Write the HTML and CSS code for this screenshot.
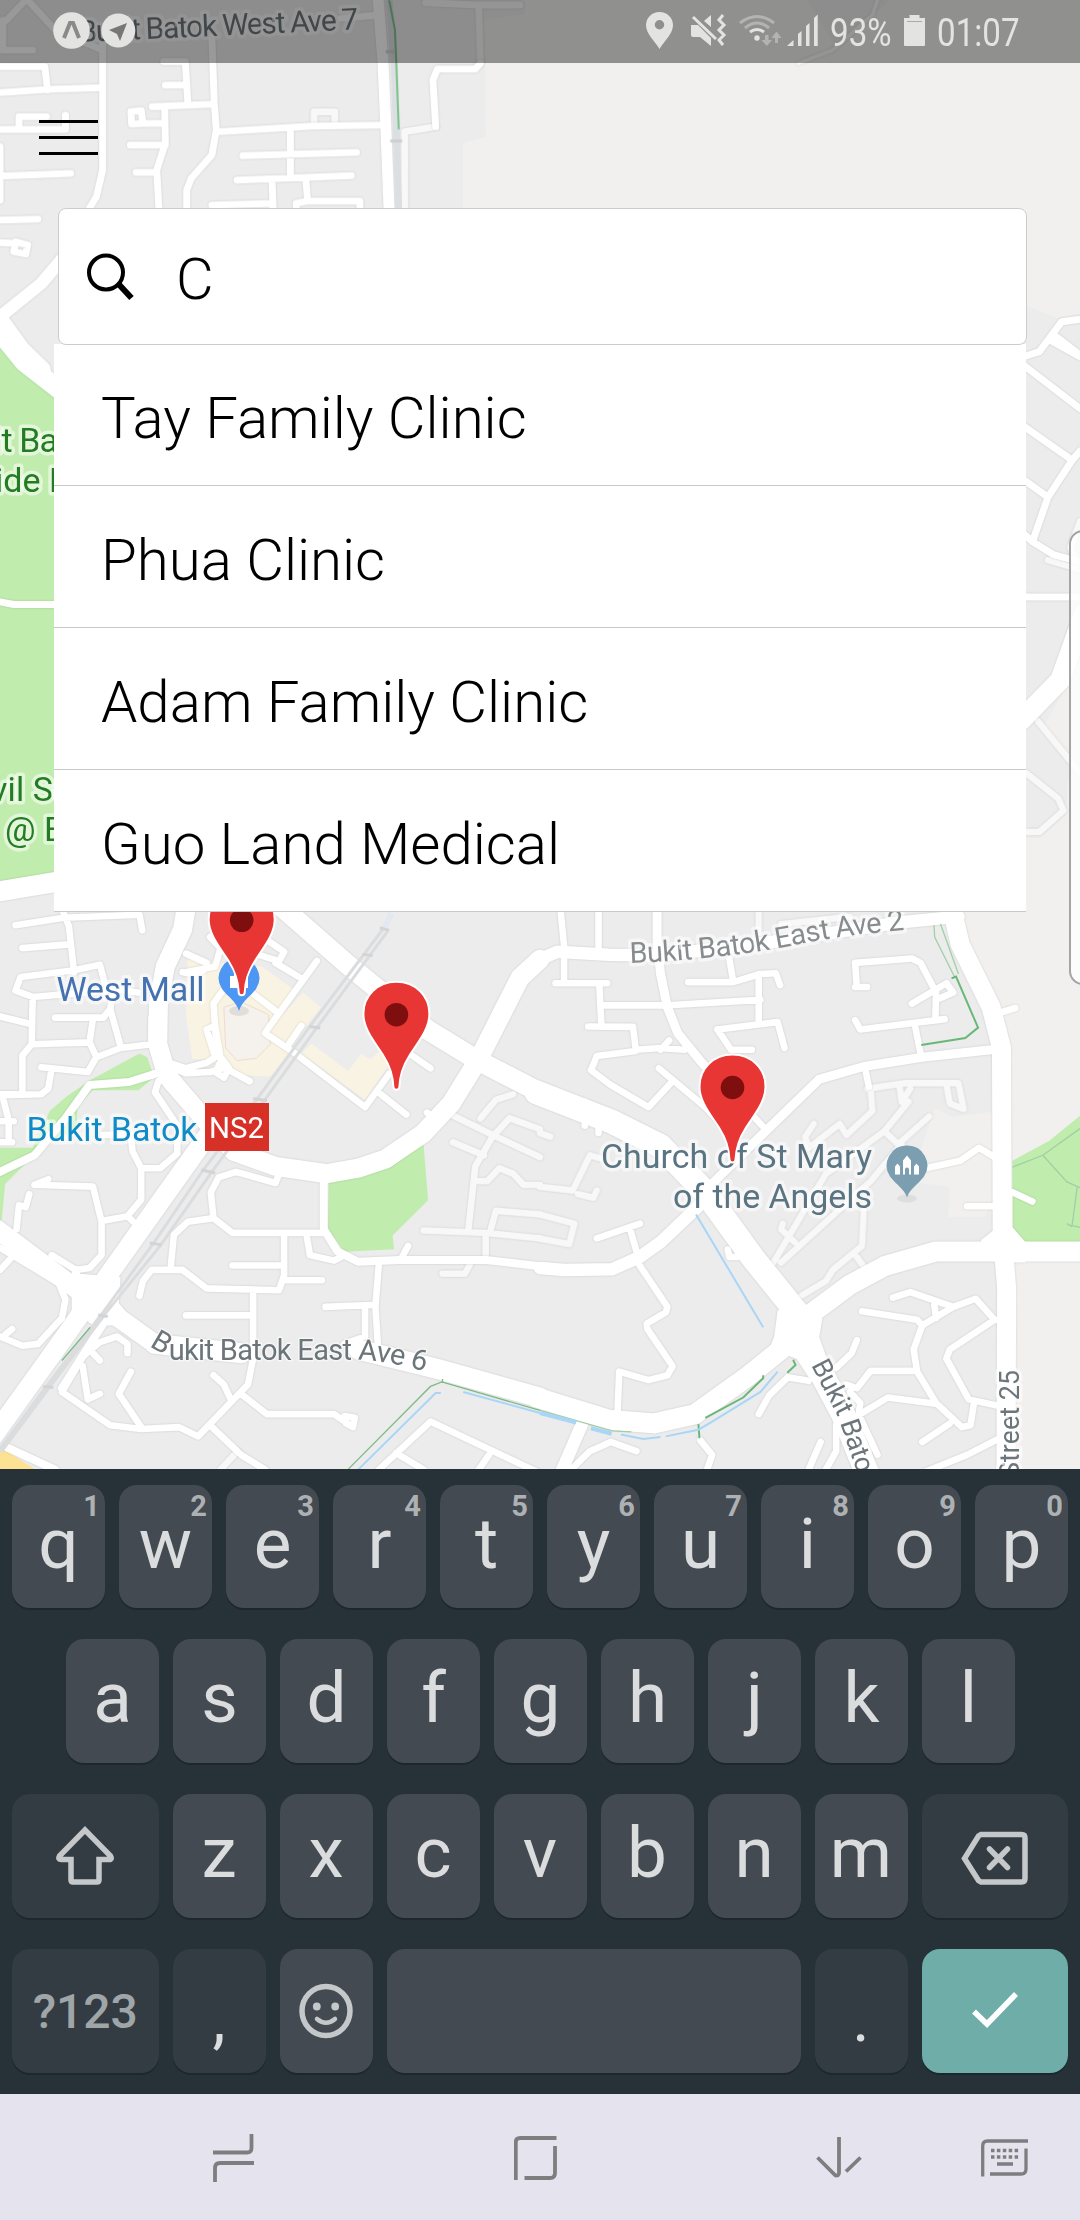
FILE: index.html
```html
<!DOCTYPE html>
<html lang="en">
<head>
<meta charset="utf-8">
<title>Clinic finder</title>
<link rel="stylesheet" href="styles.css">
</head>
<body>
<div class="screen">

<svg class="map" viewBox="0 0 1080 1470" width="1080" height="1470">
  <rect width="1080" height="1470" fill="#ececec"/>
  <!-- open land and parks -->
  <path class="land" d="M525 0V14L484 20L486 137L463 143V230H1027V306L1056 318L1080 314V0Z"/>
  <path fill="#ececec" d="M807 0H890L836 47Z"/>
  <path class="land" d="M1080 660L1045 725L1080 770V660ZM1068 780L1066 815L1040 838H1026V912L958 912L1002 1040V1190L1002 1470H1080V760Z"/>
  <path class="land" d="M935 1108L952 1117L992 1112V1200L985 1217H948L950 1187L910 1182Z"/>
  <path class="park" d="M0 342L60 400V872L0 881Z"/>
  <g transform="translate(0 900) scale(.34439 .3699)">
    <path class="park" d="M955 760L1045 747L1135 712L1230 662L1243 812L1140 907L1144 944L1000 951L953 890Z"/>
    <path class="park" d="M265 485L405 415L428 425L447 480L402 514H268L225 560L222 620L130 660L15 768L5 865H0V670H95L145 570L195 530Z"/>
    <path class="mall" d="M545 160L640 170L760 180L850 240L820 300L790 340L850 400L785 478L690 472L600 430L558 430L540 310Z"/>
    <path class="mall" d="M880 250L932 290L845 392L780 350ZM905 388L1010 462L1050 415L1075 432L1110 400L1130 445L1060 540L875 415Z"/>
    <path fill="#f5f1ec" stroke="#efdccb" vector-effect="non-scaling-stroke" d="M650 290L700 275L780 310L785 390L745 428L688 434L655 400Z"/>
    <path fill="#fde293" d="M0 1480L105 1540H0Z"/>
  </g>
  <g transform="translate(540 900) scale(.34439 .3699)">
    <path class="park" d="M1372 705L1480 650L1568 583V925H1405L1372 885Z"/>
  </g>

  <!-- faint service roads -->
  <g class="roads faint">
    <g transform="scale(.34439 .33333)">
      <path class="w8" d="M1235 8L1390 15H1510M1390 15L1395 185M912 365V335H972V365M1175 630V395L1265 380"/>
    </g>
    <g transform="translate(540 0) scale(.34439 .33333)"><path class="w4" d="M980 0L965 45L850 150L750 190"/></g>
    <g transform="translate(540 340) scale(.34439 .3699)">
      <path class="w7" d="M1445 1030L1568 1170M1411 1170L1505 1240L1520 1272L1450 1330H1411M1475 595L1568 620L1540 560L1568 490"/>
    </g>
    <g transform="translate(0 900) scale(.34439 .3699)">
      <path class="w7" d="M1310 580L1430 635L1568 695M1568 620L1480 590L1430 640L1380 720L1360 890M1395 590L1440 540L1490 525M1315 655L1405 690M1380 760H1415L1450 725L1490 740L1520 770H1568M1230 893L1410 900L1568 915M1410 900V965M1425 890L1440 840L1568 850M1285 1010H1350L1370 975M640 1540L690 1490"/>
    </g>
    <g transform="translate(540 900) scale(.34439 .3699)">
      <path class="w7" d="M950 510L1060 495H1215L1230 565L1190 550L1180 500M960 510L965 570L890 635L870 605L780 670L770 640L795 605M1045 510L1050 545L1075 510M1070 545L1000 625L860 720L830 740L665 1000M1000 625L1040 660L1130 585M1050 660L960 760L700 980M940 840L935 935L850 1000L830 1030L740 1080M920 965L940 990M740 925L700 890L705 875M0 775L95 785L145 690L180 700M110 795L155 805L165 785M0 850L100 875L85 930L0 915M0 630L30 640M635 30V90M700 65L900 45"/>
    </g>
  </g>

  <!-- white road network -->
  <g class="roads">
    <g transform="scale(.34439 .33333)">
      <path class="w8" d="M298 130V510L280 590L250 640M75 0L0 80M80 0L160 90L298 150M8 60V150H95M0 200H130L138 270M0 278L138 268L298 263M0 388H190V345M55 388V350H135M0 440V600M0 528L205 520M0 660L110 657M0 728L45 730L40 755L75 762L80 735L45 725M615 110L622 310L628 390L615 465L555 535L542 570V640M475 185H538L545 305M480 255H540M442 320L620 312M478 320L480 430L455 510L462 640M415 370H478M378 435H480M395 517H455M415 370L382 372L380 335L410 332L415 370M640 395L905 378L1110 375M843 390V530M705 467L1035 457M688 540L1020 527M790 545L793 630M888 540L893 600M615 615L793 610M860 640V610L893 603H1045V640M990 55L1095 45M1395 190L1380 207H1270L1257 240L1265 380"/>
      <path class="w11" d="M1098 0L1112 190L1120 375L1130 640"/>
      <path class="w14" d="M190 765L120 850L0 950"/>
      <path class="w18" d="M-10 950L60 1050L120 1110"/>
    </g>
    <g transform="translate(540 0) scale(.34439 .33333)"><path class="w8" d="M1411 1068L1450 1055L1515 965L1568 958M1490 1003L1568 1065"/></g>
    <g transform="translate(0 340) scale(.34439 .3699)">
      <path class="w18" d="M0 -20L70 60L180 140"/>
      <path class="w8" d="M0 708L40 715H160"/>
      <path class="w20" d="M-10 1492L180 1462"/>
    </g>
    <g transform="translate(540 340) scale(.34439 .3699)">
      <path class="w8" d="M1400 65L1568 185M1400 230L1545 325L1568 300M1545 325L1475 425L1430 545M1400 375L1475 425M1400 520L1430 545L1490 580L1568 600M1480 0L1568 45M1400 695H1568"/>
      <path class="w20" d="M1395 1030L1510 920L1580 740"/>
    </g>
    <g transform="translate(0 900) scale(.34439 .3699)">
      <path class="w7" d="M45 68L185 48L405 40L413 82M180 25L200 70L215 195M65 130L200 120M400 250L330 240L320 295L350 395M215 190L290 175L310 245L95 262L45 245L60 208L215 190M95 265L92 390L65 420V525H0M0 315L90 335M95 390L260 385L270 320M160 318H300L320 295M260 385L280 425L255 465L120 452M150 455L140 510L120 525L0 528M10 540L25 595V655M0 598H40M0 655H35M280 425L350 400L440 390M530 195L560 200L590 190M540 145L600 170M610 100L640 130L625 180L540 195M770 105L825 140L810 165L740 145M920 165L780 345L770 360L850 410L1060 560L1130 470M800 170L880 215M730 250L800 300M875 340L835 395M1105 525L1180 580M1180 410L1250 455M440 320V380M490 440L540 455L600 440L625 425L600 350L625 340L640 425L645 455L610 465L540 468L490 450M650 240L620 280L630 420M645 430L665 455L650 480L625 465L645 430M665 460L725 490M460 490L450 520L515 610V685L465 725H410L385 680L380 640M300 635H380M410 725V810L370 855L295 868M370 855L405 885M100 770L270 775L295 870V960L260 995L220 1000L150 960M100 770L140 755M85 795L75 830L55 825L48 890M620 860L612 790L635 750L685 735L800 765L810 740M405 1070L415 1030L440 1000H530L600 1050L810 1055L825 1015V905M620 860L545 870L505 905L495 1000M620 860L675 900H935M675 988H825M830 1028H935M735 1060V1240L720 1310L575 1450L520 1425L410 1430L320 1420L180 1330L240 1235L290 1195L340 1180L370 1200V1225M240 1260L255 1350M270 1225L290 1245M255 1350L290 1335M380 1275L345 1335L410 1425M620 1285L650 1310L670 1350M700 1335L775 1390H970L1010 1415M1000 1395L1030 1400L1025 1425L1005 1415M610 1420L700 1500L770 1540M540 1123H735M890 905L900 960L970 975L1000 960M945 1100L1080 1095M1060 1100V1180L1000 1200M1100 985L1090 1100L1100 1240M1165 970L1185 935M1240 575L1260 590M0 940L170 1035L190 1080L180 1130L110 1200L65 1205L0 1180M0 1000L35 965M15 1175L35 1160M1100 1540L1250 1410L1568 1550M1150 1495L1230 1540M1390 1540L1420 1500"/>
      <path class="w9" d="M0 735L100 690L190 590L260 500L375 492L450 470M940 750V890L980 950L1040 978L1160 973H1410L1568 990"/>
      <path class="w18" d="M540 25L530 80L480 180L460 280L458 390L485 475L600 600L680 680L800 720L950 740L1040 725L1120 700L1230 630L1310 550L1390 430L1510 210L1568 160"/>
      <path class="w20" d="M820 20L1010 175L1240 350L1380 430L1568 520"/>
      <path class="w18" d="M600 640L470 810L310 1020L150 1230L-20 1450"/>
      <path class="w18" d="M-10 890L220 1050L330 1120L450 1200"/>
      <path class="w20" d="M450 1200L700 1225M1040 1215L1280 1270L1568 1345"/>
      <path class="w9" d="M220 1000V1120L330 1090M310 1130L180 1320M20 1480L160 1540"/>
      <path fill="#fff" d="M225 1010L350 1020L345 1090L400 1150L270 1150L215 1110Z"/>
    </g>
    <g transform="translate(540 900) scale(.34439 .3699)">
      <path class="w7" d="M60 30L70 125V215M45 225H195M170 30V140M172 225L178 335M180 285H360L640 270M140 342L270 343L278 405L350 400L420 405M375 380L350 405M278 408L165 422L148 460L205 500L315 560L380 495M345 455L480 560L560 640M550 160L560 215M430 222H560L640 200L685 198L697 230M635 200V330M515 350L690 330L710 400M515 350L555 405H615M920 235L915 170L1080 158L1105 170L1150 250L1148 320M950 235H915M1080 280L1180 225L1200 250L1150 270M915 325L930 350L1175 322M1090 345L1105 415M945 460L955 505M1335 305L1380 292M1120 725L1220 705L1275 670L1320 695M1240 828H1320M1372 790L1430 815M165 915L290 875M260 885L285 965M280 975L370 1100L365 1115L310 1145L312 1160L385 1260L370 1285L315 1298L230 1275L225 1390M625 590L655 620M1025 1075L1075 1060L1200 1100M935 1112L1095 1135L1110 1150L1200 1100L1265 1078L1320 1135H1345M1145 1095L1150 1130M1110 1150L1085 1215L1095 1275L1150 1360L1225 1425L1250 1420L1260 1360M1320 1135L1190 1215L1180 1240L1245 1350L1345 1370M1090 1273H960L920 1320L890 1310M920 1190L905 1225L860 1265M930 1390L1010 1345L1150 1362M1110 1465L1190 1415M1120 1545L1240 1500L1345 1450M635 1390L665 1340L720 1290L780 1300M465 1460L500 1500L485 1540M90 1540L145 1490L205 1465L280 1490M815 1465L780 1540M860 1420V1490L830 1540M545 945L550 965L580 965M130 545V610M170 590V630M900 1330L930 1360L925 1390L980 1500"/>
      <path class="w10" d="M340 30V110L350 200L370 290L400 360L470 440L530 500M480 785L655 625L810 485L940 450L1110 425L1310 405"/>
      <path class="w14" d="M-10 165L50 140L200 148L350 150L700 110L1050 60L1215 45M0 995L70 1000L210 998L290 965L350 925L480 810"/>
      <path class="w22" d="M-10 520L210 600L350 665L480 790L620 970L750 1120L800 1250L880 1390L950 1550"/>
      <path class="w18" d="M1195 20L1220 120L1310 290L1340 400L1342 900L1355 1050L1353 1550"/>
      <path class="w20" d="M1580 950H1150L1000 990L900 1040L770 1130L720 1200L600 1290L450 1390L330 1415L200 1405L-10 1345"/>
      <path class="w14" d="M130 1400L60 1550"/>
      <path fill="#fff" d="M690 1110L745 1095H780L820 1130L805 1215L850 1310L780 1290L745 1240L715 1230L650 1250L680 1180ZM1280 920L1320 890V790H1372V885L1410 925V980H1330L1300 970Z"/>
    </g>
  </g>

  <!-- rail, paths and canals -->
  <g class="lines">
    <g transform="scale(.34439 .33333)">
      <path stroke="#dcdfe1" stroke-width="7" d="M1130 0L1145 190L1158 640"/>
      <path stroke="#cdd0d3" stroke-width="3" d="M1120 155H1145M1133 423H1168"/>
      <path stroke="#7cc48c" stroke-width="2" d="M1130 0L1147 90L1158 388"/>
    </g>
    <g transform="translate(0 900) scale(.34439 .3699)">
      <path stroke="#e3e8f2" stroke-width="6" d="M1137 35L1115 80"/>
      <path stroke="#dadcde" stroke-width="3" d="M1115 75L905 335L745 540L590 730L448 925L295 1120M1125 85L920 345L765 545L615 735L465 935L300 1125"/>
      <path stroke="#dadcde" stroke-width="6" d="M300 1120L140 1315L0 1490"/>
      <path stroke="#d2d4d7" stroke-width="3" d="M1103 75L1130 82M1052 147L1082 150M898 342L930 346M735 537L775 542M585 730L625 738M435 927L468 932M285 1122L313 1126M125 1315L155 1318"/>
      <path stroke="#7cba86" stroke-width="1.3" d="M262 1155L180 1245M1010 1540L1250 1315L1283 1303L1568 1380M1285 1295V1306"/>
      <path stroke="#a9d5f7" stroke-width="2" d="M1040 1540L1265 1333H1280M1345 1330L1568 1387"/>
    </g>
    <g transform="translate(540 900) scale(.34439 .3699)">
      <path stroke="#9fd0a4" stroke-width="1.3" d="M1144 68L1146 100L1205 210M1163 65L1215 200M0 1380L210 1435L265 1438M1372 722L1460 690L1568 618M1460 690L1530 762L1568 778M1560 775L1545 880L1568 885M1530 875L1545 883"/>
      <path stroke="#69b879" stroke-width="2" d="M1195 212L1208 207L1272 345L1235 373L1107 392M735 1243L742 1257L718 1278M648 1285V1293L590 1345L480 1400M460 1417L463 1455"/>
      <path stroke="#a9d5f7" stroke-width="2" d="M453 850L648 1155M690 1275L640 1330L500 1410L460 1432L365 1450M235 1445L300 1457L350 1452"/>
      <path stroke="#a9d5f7" stroke-width="4" d="M0 1387L105 1413M148 1428L208 1443"/>
    </g>
  </g>

  <!-- place icons -->
  <g transform="translate(239 978)">
    <ellipse cx="0" cy="33" rx="10" ry="5" fill="#000" opacity=".08"/>
    <path fill="#4d96f3" d="M0-20A20 20 0 0 1 17 11C11 19 3 23 0 33C-3 23-11 19-17 11A20 20 0 0 1 0-20Z"/>
    <path fill="#fff" d="M-9-2V10H9V-2H5V-6H-5V-2Z"/>
  </g>
  <g transform="translate(907 1165.500)">
    <ellipse cx="0" cy="33" rx="10" ry="4" fill="#000" opacity=".06"/>
    <path fill="#7b9fb0" d="M0-20A20 20 0 0 1 17 11C11 19 3 23 0 32C-3 23-11 19-17 11A20 20 0 0 1 0-20Z"/>
    <path fill="#fff" d="M-12 9V1L-9.500-2L-7 1V9ZM-4 9V-5L0-10L4-5V9H2V4A2 2 0 0 0-2 4V9ZM7 9V1L9.500-2L12 1V9Z"/>
  </g>

  <!-- labels -->
  <defs>
    <path id="east2" d="M630 963C690 961 750 954 800 944S860 935 920 928"/>
    <path id="east6" d="M149 1346L166 1356M171 1360L365 1360Q395 1362 440 1376"/>
    <path id="south" d="M811 1365L838 1417Q846 1440 872 1515"/>
    <path id="street" d="M1019 1478V1340"/>
  </defs>
  <g class="label">
    <text class="road" transform="translate(79 42) rotate(-2.600)" font-size="30" textLength="280">Bukit Batok West Ave 7</text>
    <g class="green">
      <text x="-6" y="452" textLength="64">it Ba</text><text x="-5" y="492">ide P</text>
      <text x="-9" y="800.500" textLength="80">vil Se</text><text x="5" y="841">@ B</text>
    </g>
    <text class="shop" x="56.500" y="1001" textLength="148">West Mall</text>
    <text class="station" x="26.500" y="1141" textLength="171">Bukit Batok</text>
    <text class="church" x="601" y="1168" textLength="271">Church of St Mary</text>
    <text class="church" x="673" y="1208" textLength="199">of the Angels</text>
    <g class="road" font-size="29">
      <text class="pale"><textPath href="#east2" textLength="277">Bukit Batok East Ave 2</textPath></text>
      <text class="thin-halo"><textPath href="#east6" textLength="275">Bukit Batok East Ave 6</textPath></text>
      <text font-size="27"><textPath href="#south" textLength="119">Bukit Bato</textPath></text>
      <text font-size="27"><textPath href="#street" textLength="108">Street 25</textPath></text>
    </g>
  </g>
  <rect x="205" y="1103" width="64" height="48" fill="#d63027"/>
  <text x="209" y="1138" font-size="29" fill="#fff" textLength="55" lengthAdjust="spacingAndGlyphs">NS2</text>

  <!-- clinic markers -->
  <defs>
    <g id="marker">
      <path fill="#e83634" stroke="#fff" stroke-width="2" d="M0-33C19-33 33-19 33-1C33 15 21 28 13 41C6 52 3.500 60 3 72A3 3 0 0 1-3 72C-3.500 60-6 52-13 41C-21 28-33 15-33-1C-33-19-19-33 0-33Z"/>
      <circle r="11.800" fill="#7f0f0f"/>
    </g>
  </defs>
  <use href="#marker" x="241.700" y="920.300"/>
  <use href="#marker" x="396.400" y="1014.700"/>
  <use href="#marker" x="732.500" y="1087.500"/>
</svg>

<div class="edge-panel"></div>

<header class="status">
  <svg class="apps" width="90" height="63" viewBox="50 0 90 63">
    <circle cx="71.500" cy="30.500" r="18.300" fill="#e3e3e2"/>
    <path fill="none" stroke="#8a8a8a" stroke-width="4" d="M64 38L70 23H73L79 38"/>
    <circle cx="118.300" cy="30.500" r="17" fill="#e3e3e2"/>
    <path fill="#777" d="M109 30L127 23L120 41L117 34Z"/>
  </svg>
  <svg width="177" height="63" viewBox="644 0 177 63" fill="#e3e3e1">
    <path fill-rule="evenodd" d="M659.500 12A13.300 13.300 0 0 1 673 25C673 34 664 41 659.500 49C655 41 646 34 646 25A13.300 13.300 0 0 1 659.500 12ZM659.500 20A4.700 4.700 0 1 0 659.500 29.500A4.700 4.700 0 0 0 659.500 20Z"/>
    <path d="M691 25H698L711 38V46L700 37H693Q691 37 691 35ZM704 21L711 15V27Z"/>
    <g fill="none" stroke="#e3e3e1">
      <path stroke-width="3" d="M693 17L716 39M723 15L719 20L724 25L719 30L724 35L719 40L723 45"/>
      <path stroke-width="3" d="M750 32Q757 27 764 32"/>
      <path stroke="#b3b3b1" stroke-width="3" d="M740 23Q757 10 774 23M745 28Q757 18 769 28"/>
    </g>
    <circle cx="757" cy="38" r="2.700"/>
    <path fill="#b3b3b1" d="M765 35H768.500V40H772L766.800 46L761.500 40H765ZM775 43V38H771.500L776.500 31.500L781.500 38H778V43Z"/>
    <path d="M787 46L793.500 40V46ZM798 46V34L801.500 31V46ZM806 46V26L809.500 23V46ZM814 46V18L817.700 14.500V46Z"/>
  </svg>
  <span class="battery-text">93%</span>
  <svg width="21" height="63" viewBox="0 0 21 63" fill="#e3e3e1"><path d="M5.500 15H15.500V18H21V45Q21 46 20 46H1Q0 46 0 45V18H5.500Z"/><path fill="#aaa" d="M3 21H18V22H3Z"/></svg>
  <span class="clock">01:07</span>
</header>

<main class="content">
  <div class="menu"><i></i><i></i><i></i></div>
  <div class="search">
    <svg width="50" height="50" viewBox="0 0 50 50" fill="none" stroke="#000"><circle cx="20" cy="20.500" r="17" stroke-width="4"/><path stroke-width="6" d="M32.500 32L45.500 46"/></svg>
    <span>C</span>
  </div>
  <ul class="results">
    <li>Tay Family Clinic</li>
    <li>Phua Clinic</li>
    <li>Adam Family Clinic</li>
    <li>Guo Land Medical</li>
  </ul>
</main>

<section class="keyboard">
  <div class="row top">
    <div class="key">q<sup>1</sup></div><div class="key">w<sup>2</sup></div><div class="key">e<sup>3</sup></div><div class="key">r<sup>4</sup></div><div class="key">t<sup>5</sup></div><div class="key">y<sup>6</sup></div><div class="key">u<sup>7</sup></div><div class="key">i<sup>8</sup></div><div class="key">o<sup>9</sup></div><div class="key">p<sup>0</sup></div>
  </div>
  <div class="row middle">
    <div class="key">a</div><div class="key">s</div><div class="key">d</div><div class="key">f</div><div class="key">g</div><div class="key">h</div><div class="key">j</div><div class="key">k</div><div class="key">l</div>
  </div>
  <div class="row">
    <div class="key wide dark"><svg width="60" height="60" viewBox="0 0 60 60"><path d="M30 4L4.500 30Q2.500 33.500 6.500 33.500H16V54Q16 56 18 56H42Q44 56 44 54V33.500H54Q57.500 33.500 55.500 30Z"/></svg></div>
    <div class="key">z</div><div class="key">x</div><div class="key">c</div><div class="key">v</div><div class="key">b</div><div class="key">n</div><div class="key">m</div>
    <div class="key wide dark"><svg class="erase" width="68" height="56" viewBox="0 0 68 56"><path d="M20 3.500H60.500Q64 3.500 64 7V47.500Q64 51 60.500 51H20L17.500 49.500L3.500 27.500L17.500 5Z"/><path stroke-linecap="round" d="M28.500 18L46.500 36.500M46.500 18L28.500 36.500"/></svg></div>
  </div>
  <div class="row">
    <div class="key wide dark symbols">?123</div>
    <div class="key dark mark">,</div>
    <div class="key"><svg class="smile" width="54" height="56" viewBox="0 0 54 56"><ellipse cx="27" cy="28" rx="24" ry="24.500"/><path stroke-width="4.500" stroke-linecap="round" d="M18 36Q27 43.500 36 36"/><g fill="#c5c8ca" stroke="none"><ellipse cx="17.800" cy="23.500" rx="3.900" ry="4.100"/><ellipse cx="36.200" cy="23.500" rx="3.900" ry="4.100"/></g></svg></div>
    <div class="key space"></div>
    <div class="key dark mark">.</div>
    <div class="key wide enter"><svg width="50" height="40" viewBox="0 0 50 40"><path stroke="#fff" d="M4 20.500L17 33L46 3"/></svg></div>
  </div>
</section>

<nav class="nav">
  <svg width="41" height="48" viewBox="0 0 41 48"><path d="M0 18.500H34Q38.500 18.500 38.500 14V0M2 48V34Q2 29 7 29H41"/></svg>
  <svg width="43" height="46" viewBox="0 0 43 46"><path d="M1.800 45V7Q1.800 3 6 3H42.500M41 11V38Q41 43 36 43H10.500"/></svg>
  <svg width="46" height="42" viewBox="0 0 46 42"><path d="M23 0V36Q22.500 39 19.500 38.500L1.500 20.500M44.500 20.500L30 34.500"/></svg>
  <svg width="47" height="38" viewBox="0 0 47 38"><path stroke-width="3.300" d="M1.700 37.500V7Q1.700 2 6.500 2H47M45 9.500V30Q45 35 40 35H9M16 25H32"/><path stroke-width="3.500" stroke-dasharray="3.500 2.400" d="M10 11.500H38M10 18H38"/></svg>
</nav>
</div>
</body>
</html>
```
FILE: styles.css
```css
* { box-sizing: border-box; }

body {
  margin: 0;
  font-family: Roboto, "Liberation Sans", sans-serif;
}

.screen {
  position: relative;
  display: flex;
  flex-direction: column;
  width: 1080px;
  height: 2220px;
  overflow: hidden;
}

/* Map canvas lies under the interface */
.map {
  position: absolute;
  top: 0;
  left: 0;
}

.land { fill: #f1f0ee; }
.park { fill: #c0ecae; }
.mall { fill: #f9f3e3; }

.roads {
  fill: none;
  stroke: #fff;
  stroke-linecap: round;
  stroke-linejoin: round;
  filter: drop-shadow(0 0 1px rgba(0, 0, 0, .14));
}
.roads path { vector-effect: non-scaling-stroke; }
.roads path[fill] { stroke: none; }
.faint { stroke: #f8f8f8; }
.w4 { stroke-width: 4px; }
.w7 { stroke-width: 6.600px; }
.w8 { stroke-width: 7px; }
.w9 { stroke-width: 8px; }
.w10 { stroke-width: 9px; }
.w11 { stroke-width: 11px; }
.w14 { stroke-width: 12.500px; }
.w18 { stroke-width: 19px; }
.w20 { stroke-width: 20px; }
.w22 { stroke-width: 24px; }

.lines { fill: none; }
.lines path { vector-effect: non-scaling-stroke; }

.label {
  font-size: 34px;
  paint-order: stroke;
  stroke: rgba(255, 255, 255, .55);
  stroke-width: 7px;
  stroke-linejoin: round;
}
.thin-halo { stroke-width: 3px; }
.road { fill: #6b757a; }
.pale { fill: #878c8f; }
.green { fill: #237c23; }
.shop { fill: #4572b0; }
.station { fill: #0f8cc7; }
.church { fill: #5a7482; }

/* Pull-out handle at the right edge */
.edge-panel {
  position: absolute;
  left: 1069px;
  top: 530px;
  width: 30px;
  height: 455px;
  border: 2px solid #a5a5a5;
  border-radius: 14px;
  background: rgba(255, 255, 255, .8);
}

.status {
  position: relative;
  display: flex;
  height: 63px;
  background: rgba(0, 0, 0, .4);
  color: #e3e3e1;
  font-size: 39px;
  line-height: 66px;
}
.apps { margin: 0 504px 0 50px; }
.battery-text,
.clock {
  transform: scaleX(.85);
  transform-origin: left;
  white-space: nowrap;
}
.battery-text { width: 74px; margin: 0 0 0 9px; }
.clock { margin-left: 12px; }

.content {
  position: relative;
  flex: 1;
}

.menu {
  display: flex;
  flex-direction: column;
  gap: 13px;
  width: 59px;
  margin: 57px 0 53px 39px;
}
.menu i {
  height: 3px;
  background: #000;
}

.search {
  position: relative;
  z-index: 1;
  display: flex;
  width: 969px;
  height: 137px;
  margin-left: 58px;
  padding-left: 27px;
  border: 1px solid #ccc;
  border-radius: 8px;
  background: #fff;
  font-size: 58px;
  font-weight: 300;
  line-height: 141px;
}
.search svg { margin: 43px 40px 0 0; }

.results {
  width: 972px;
  margin: -1px 0 0 54px;
  padding: 0;
  list-style: none;
}
.results li {
  height: 142px;
  padding-left: 47px;
  border-bottom: 1px solid #c8c8c8;
  background: #fff;
  font-size: 58.200px;
  font-weight: 300;
  line-height: 148px;
}

.keyboard {
  position: relative;
  display: flex;
  flex-direction: column;
  gap: 31px;
  height: 625px;
  padding: 16px 12px 21px;
  background: #273238;
}
.row {
  display: flex;
  gap: 14px;
  height: 124px;
}
.top { height: 123px; }
.middle { padding: 0 54px; }
.key {
  position: relative;
  flex: 1 0 93px;
  display: flex;
  justify-content: center;
  border-radius: 18px;
  background: #434a51;
  box-shadow: 0 2px 0 #1d272e;
  color: #dadcdd;
  font-size: 71px;
  line-height: 117px;
}
.key sup {
  position: absolute;
  top: 0;
  right: 5px;
  color: #aeb1b4;
  font-size: 29px;
  font-weight: 700;
  line-height: 43px;
}
.wide { flex: 0 0 146.500px; }
.dark { background: #323c42; }
.space { flex: 0 0 414px; }
.enter { background: #6fada8; }
.symbols {
  color: #a0a5a8;
  font-size: 48px;
  font-weight: 500;
  line-height: 125px;
}
.mark { font-size: 66px; line-height: 139px; }
.key svg {
  align-self: center;
  fill: none;
  stroke: #c5c8ca;
  stroke-width: 5.500px;
}
.key .erase { margin-top: 6px; }

.nav {
  position: relative;
  display: flex;
  align-items: center;
  height: 126px;
  padding: 2px 0 0 213px;
  background: #e5e4ee;
}
.nav svg {
  fill: none;
  stroke: #7e7e80;
  stroke-width: 3.800px;
}
.nav svg:nth-child(1) { margin-right: 260px; }
.nav svg:nth-child(2) { margin-right: 259px; }
.nav svg:nth-child(3) { margin-right: 119px; }
```
